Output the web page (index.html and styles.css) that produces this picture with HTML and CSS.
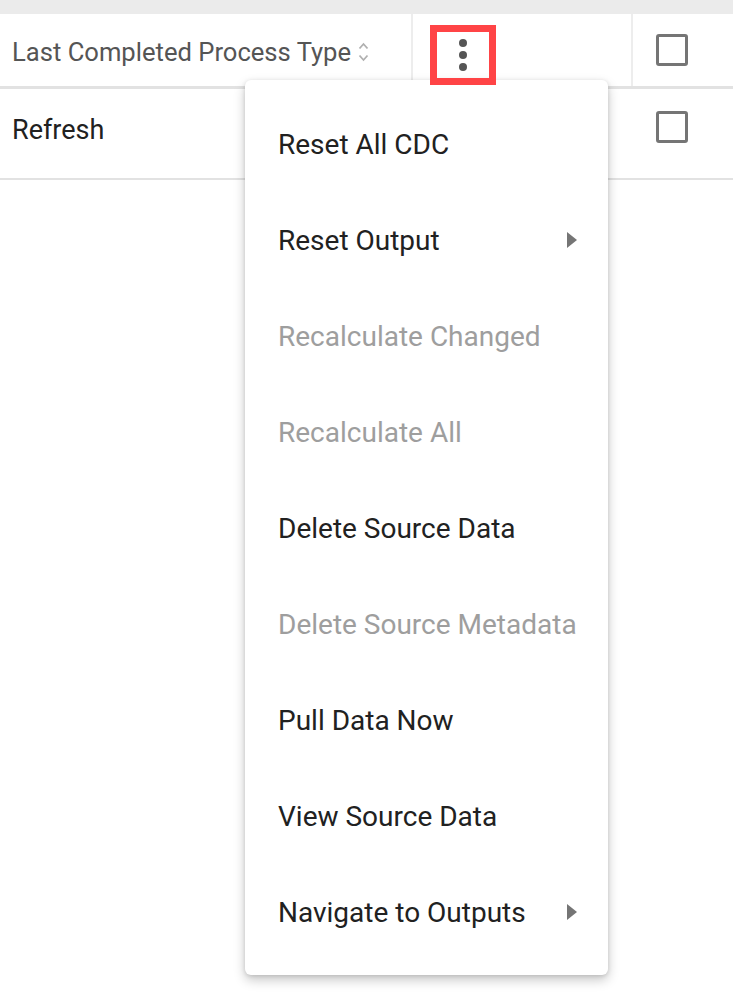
FILE: index.html
```html
<!DOCTYPE html>
<html lang="en">
<head>
    <meta charset="UTF-8">
    <meta name="viewport" content="width=device-width, initial-scale=1.0">
    <title>Sources</title>
    <link rel="stylesheet" href="styles.css">
</head>
<body>
    <div class="top-strip"></div>

    <div class="table">
        <div class="row header-row">
            <div class="cell col-type">
                <span class="header-text">Last Completed Process Type</span>
                <svg class="sort-icon" width="11" height="20" viewBox="0 0 11 20">
                    <path d="M1.5 6.5 L5.5 2 L9.5 6.5" fill="none" stroke="#b0b0b0" stroke-width="1.8"/>
                    <path d="M1.5 13.5 L5.5 18 L9.5 13.5" fill="none" stroke="#b0b0b0" stroke-width="1.8"/>
                </svg>
            </div>
            <div class="cell col-actions">
                <button class="kebab" type="button">
                    <span class="dot"></span>
                    <span class="dot"></span>
                    <span class="dot"></span>
                </button>
            </div>
            <div class="cell col-check">
                <span class="checkbox"></span>
            </div>
        </div>
        <div class="row data-row">
            <div class="cell col-type">
                <span class="row-text">Refresh</span>
            </div>
            <div class="cell col-actions"></div>
            <div class="cell col-check">
                <span class="checkbox"></span>
            </div>
        </div>
    </div>

    <!-- Row actions menu -->
    <ul class="menu">
        <li class="menu-item">Reset All CDC</li>
        <li class="menu-item">Reset Output
            <svg class="submenu-arrow" width="10" height="16" viewBox="0 0 10 16"><path d="M0 0 L10 8 L0 16 Z" fill="#757575"/></svg>
        </li>
        <li class="menu-item disabled">Recalculate Changed</li>
        <li class="menu-item disabled">Recalculate All</li>
        <li class="menu-item">Delete Source Data</li>
        <li class="menu-item disabled">Delete Source Metadata</li>
        <li class="menu-item">Pull Data Now</li>
        <li class="menu-item">View Source Data</li>
        <li class="menu-item">Navigate to Outputs
            <svg class="submenu-arrow" width="10" height="16" viewBox="0 0 10 16"><path d="M0 0 L10 8 L0 16 Z" fill="#757575"/></svg>
        </li>
    </ul>
</body>
</html>
```

FILE: styles.css
```css
/* General */
body {
    font-family: Roboto, "Noto Sans", Arial, sans-serif;
    background: #fff;
    margin: 0;
    padding: 0;
    color: #212121;
}

.top-strip {
    height: 14px;
    background: #ebebeb;
}

/* Table */
.row {
    display: grid;
    grid-template-columns: 413px 220px 1fr;
}

.header-row {
    height: 72px;
    border-bottom: 3px solid #e2e2e2;
}

.data-row {
    height: 89px;
    border-bottom: 2px solid #e2e2e2;
}

.cell {
    display: flex;
    align-items: center;
}

.header-row .cell {
    border-right: 2px solid #ededed;
    padding-top: 4px;
}

.header-row .cell:last-child {
    border-right: none;
}

.col-type {
    padding-left: 12px;
}

.header-text {
    font-size: 25.6px;
    color: #555;
}

.sort-icon {
    margin-left: 7px;
}

.data-row .col-type {
    padding-bottom: 8px;
}

.row-text {
    font-size: 27px;
    color: #212121;
}

.header-row .col-actions {
    padding-left: 17px;
    padding-top: 0;
    align-items: flex-end;
}

/* Kebab button, highlighted (sits over the open menu) */
.kebab {
    position: relative;
    z-index: 2;
    width: 66px;
    height: 60px;
    margin-bottom: 1px;
    border: 7px solid #ff4446;
    background: transparent;
    padding: 0;
    display: flex;
    flex-direction: column;
    align-items: center;
    justify-content: center;
    gap: 4px;
    cursor: pointer;
}

.dot {
    width: 8px;
    height: 8px;
    border-radius: 50%;
    background: #555;
}

.col-check {
    padding-left: 23px;
}

.header-row .col-check {
    padding-top: 0;
}

.checkbox {
    width: 26px;
    height: 26px;
    border: 3px solid #757575;
    border-radius: 3px;
}

.data-row .col-check {
    align-items: flex-start;
    padding-top: 22px;
}

/* Menu */
.menu {
    position: absolute;
    z-index: 1;
    left: 245px;
    top: 80px;
    width: 363px;
    margin: 0;
    padding: 16px 0 15px;
    list-style: none;
    background: #fff;
    border-radius: 6px;
    box-shadow: 0 5px 12px rgba(0, 0, 0, 0.22), 0 1px 4px rgba(0, 0, 0, 0.12);
}

.menu-item {
    height: 96px;
    padding: 0 31px 0 33px;
    display: flex;
    align-items: center;
    justify-content: space-between;
    font-size: 28px;
    color: #212121;
}

.menu-item.disabled {
    color: #9e9e9e;
}
```
